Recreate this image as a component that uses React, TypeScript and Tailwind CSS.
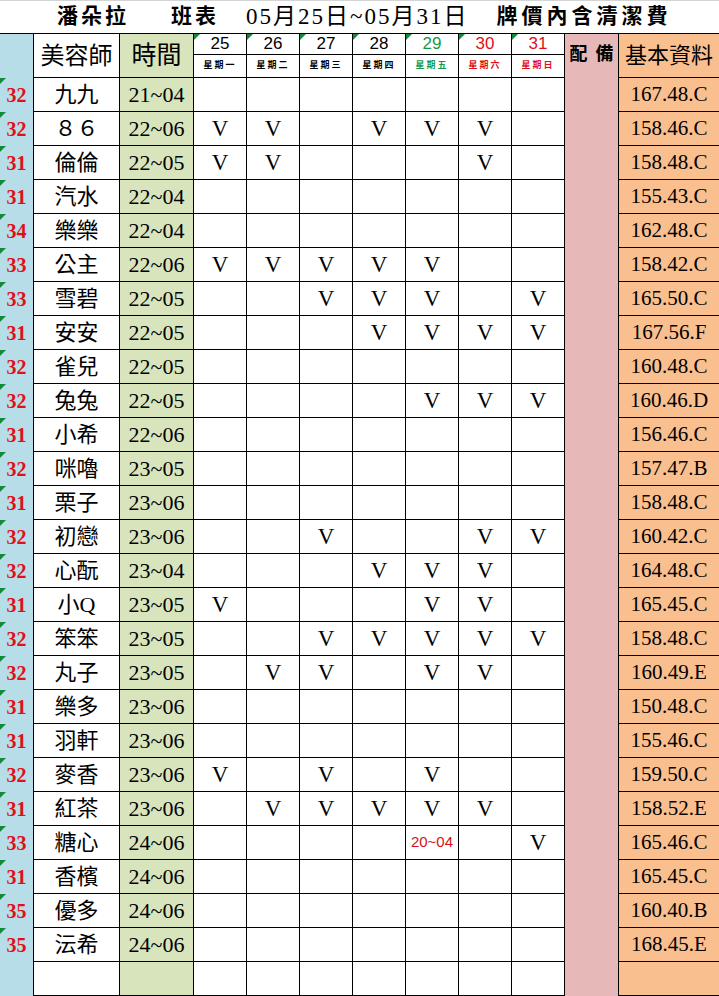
import React from 'react';

const GRID =
  'grid grid-cols-[34px_86px_74px_53px_53px_53px_53px_53px_53px_53px_54px_100px]';
const SERIF = "font-['Liberation_Serif','Noto_Sans_CJK_TC',serif]";
const SANS = "font-['Liberation_Sans','Noto_Sans_CJK_TC',sans-serif]";

type Row = { n: string; name: string; time: string; days: string; info: string };

// V = 有班, T = 特別時段 20~04
const rows: Row[] = [
  { n: '32', name: '九九', time: '21~04', days: '       ', info: '167.48.C' },
  { n: '32', name: '８６', time: '22~06', days: 'VV VVV ', info: '158.46.C' },
  { n: '31', name: '倫倫', time: '22~05', days: 'VV   V ', info: '158.48.C' },
  { n: '31', name: '汽水', time: '22~04', days: '       ', info: '155.43.C' },
  { n: '34', name: '樂樂', time: '22~04', days: '       ', info: '162.48.C' },
  { n: '33', name: '公主', time: '22~06', days: 'VVVVV  ', info: '158.42.C' },
  { n: '33', name: '雪碧', time: '22~05', days: '  VVV V', info: '165.50.C' },
  { n: '31', name: '安安', time: '22~05', days: '   VVVV', info: '167.56.F' },
  { n: '32', name: '雀兒', time: '22~05', days: '       ', info: '160.48.C' },
  { n: '32', name: '兔兔', time: '22~05', days: '    VVV', info: '160.46.D' },
  { n: '31', name: '小希', time: '22~06', days: '       ', info: '156.46.C' },
  { n: '32', name: '咪嚕', time: '23~05', days: '       ', info: '157.47.B' },
  { n: '31', name: '栗子', time: '23~06', days: '       ', info: '158.48.C' },
  { n: '32', name: '初戀', time: '23~06', days: '  V  VV', info: '160.42.C' },
  { n: '32', name: '心酛', time: '23~04', days: '   VVV ', info: '164.48.C' },
  { n: '31', name: '小Q', time: '23~05', days: 'V   VV ', info: '165.45.C' },
  { n: '32', name: '笨笨', time: '23~05', days: '  VVVVV', info: '158.48.C' },
  { n: '32', name: '丸子', time: '23~05', days: ' VV VV ', info: '160.49.E' },
  { n: '31', name: '樂多', time: '23~06', days: '       ', info: '150.48.C' },
  { n: '31', name: '羽軒', time: '23~06', days: '       ', info: '155.46.C' },
  { n: '32', name: '麥香', time: '23~06', days: 'V V V  ', info: '159.50.C' },
  { n: '31', name: '紅茶', time: '23~06', days: ' VVVVV ', info: '158.52.E' },
  { n: '33', name: '糖心', time: '24~06', days: '    T V', info: '165.46.C' },
  { n: '31', name: '香檳', time: '24~06', days: '       ', info: '165.45.C' },
  { n: '35', name: '優多', time: '24~06', days: '       ', info: '160.40.B' },
  { n: '35', name: '沄希', time: '24~06', days: '       ', info: '168.45.E' },
];

const dayHeads = [
  { d: '25', w: '星期一', c: 'text-black' },
  { d: '26', w: '星期二', c: 'text-black' },
  { d: '27', w: '星期三', c: 'text-black' },
  { d: '28', w: '星期四', c: 'text-black' },
  { d: '29', w: '星期五', c: 'text-[#139a47]' },
  { d: '30', w: '星期六', c: 'text-[#e0101a]' },
  { d: '31', w: '星期日', c: 'text-[#e0101a]' },
];

function Flag() {
  return (
    <span className="absolute left-0 top-0 h-0 w-0 border-t-[6px] border-r-[6px] border-t-[#14893a] border-r-transparent" />
  );
}

function DataRow({ r }: { r?: Row }) {
  const days = (r ? r.days : '       ').split('');
  return (
    <div className={`${GRID} h-[34px]`}>
      <div className={`relative flex items-center justify-center border-r border-black bg-[#b7dee8] ${SERIF} text-[20px] font-bold text-[#e0101a]`}>
        {r && <Flag />}
        {r?.n}
      </div>
      <div className={`flex items-center justify-center border-r border-b border-black ${SERIF} text-[22px] text-black`}>
        {r?.name}
      </div>
      <div className={`flex items-center justify-center border-r border-b border-black bg-[#d8e4bc] ${SERIF} text-[22px] text-black`}>
        {r?.time}
      </div>
      {days.map((v, i) => (
        <div key={i} className="flex items-center justify-center border-r border-b border-black">
          {v === 'V' && <span className={`${SERIF} text-[23px] leading-none text-black`}>V</span>}
          {v === 'T' && <span className={`${SANS} text-[15px] text-[#d80f18]`}>20~04</span>}
        </div>
      ))}
      <div className="border-r border-black bg-[#e6b8b7]" />
      <div className={`flex items-center justify-center border-b border-black bg-[#fabf8f] ${SERIF} text-[21px] text-black`}>
        {r?.info}
      </div>
    </div>
  );
}

export default function App() {
  return (
    <div className="h-[996px] w-[719px] overflow-hidden bg-white">
      {/* Title */}
      <div className={`flex h-[34px] items-center border-t border-[#d4d4d4] border-b-black border-b ${SERIF} text-[21px] font-bold text-black`}>
        <span className="ml-[57px] tracking-[3px]">潘朵拉</span>
        <span className="ml-[42px] tracking-[3px]">班表</span>
        <span className="ml-[27px] tracking-[2px] font-normal text-[23px]">
          05月25日~05月31日
        </span>
        <span className="ml-[28px] tracking-[4px] text-[21px]">牌價內含清潔費</span>
      </div>

      {/* Header */}
      <div className={`${GRID} h-[44px]`}>
        <div className="border-r border-black bg-[#b7dee8]" />
        <div className={`flex items-center justify-center border-r border-b border-black ${SERIF} text-[24px] text-black`}>
          美容師
        </div>
        <div className={`flex items-center justify-center border-r border-b border-black bg-[#d8e4bc] ${SERIF} text-[25px] text-black`}>
          時間
        </div>
        {dayHeads.map((h) => (
          <div key={h.d} className="flex flex-col border-r border-b border-black">
            <div className={`relative flex h-[21px] items-center justify-center border-b border-black ${SANS} text-[17px] ${h.c}`}>
              <Flag />
              {h.d}
            </div>
            <div className={`flex flex-1 items-center justify-center ${SERIF} text-[9px] font-bold tracking-[2px] ${h.c}`}>
              {h.w}
            </div>
          </div>
        ))}
        <div className={`flex items-center justify-center gap-[8px] border-r border-black bg-[#e6b8b7] pb-[4px] ${SERIF} text-[18px] font-bold text-black`}>
          <span>配</span>
          <span>備</span>
        </div>
        <div className={`flex items-center justify-center border-b border-black bg-[#fabf8f] ${SERIF} text-[22px] text-black`}>
          基本資料
        </div>
      </div>

      {rows.map((r, i) => (
        <DataRow key={i} r={r} />
      ))}
      <DataRow />
    </div>
  );
}
